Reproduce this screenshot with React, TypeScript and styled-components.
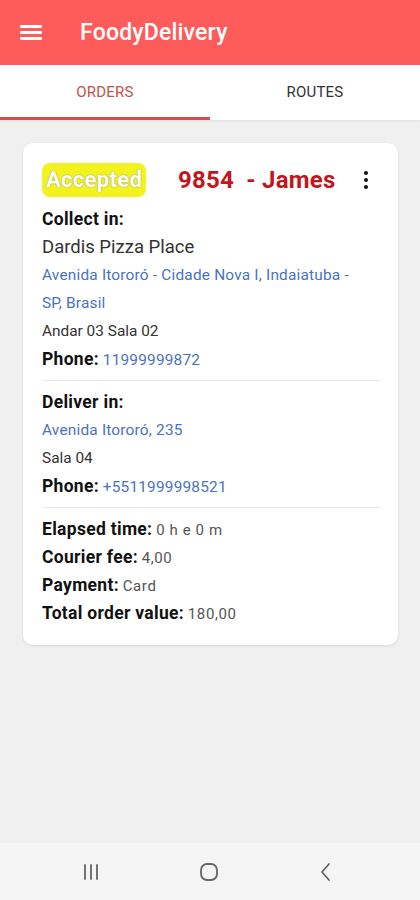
import * as React from 'react';
import styled, { createGlobalStyle } from 'styled-components'

const GlobalStyle = createGlobalStyle`
html, body {
margin: 0;
padding: 0;
background: #f0f0f0;
font-family: Roboto, "Noto Sans", Arial, sans-serif;
}
`

const Screen = styled.div`
height: 900px;
width: 420px;
display: flex;
flex-direction: column;
background: #f0f0f0;
`

const AppBar = styled.div`
height: 65px;
background: #fe5b5b;
display: flex;
align-items: center;
padding-left: 20px;
box-sizing: border-box;
`

const MenuButton = styled.div`
width: 22px;
display: flex;
flex-direction: column;
gap: 3.5px;
margin-right: 38px;
span {
height: 2.5px;
background: #fff;
border-radius: 1px;
}
`

const Title = styled.div`
color: #fff;
font-size: 23px;
font-weight: 500;
letter-spacing: 0.2px;
`

const Tabs = styled.div`
height: 55px;
background: #fff;
display: flex;
box-shadow: 0 1px 2px rgba(0,0,0,0.08);
`

const Tab = styled.div<{ active?: boolean }>`
flex: 1;
display: flex;
align-items: center;
justify-content: center;
font-size: 15px;
letter-spacing: 0.2px;
color: ${p => p.active ? '#c6504c' : '#333'};
border-bottom: 3px solid ${p => p.active ? '#d05050' : 'transparent'};
padding-top: 2px;
`

const Content = styled.div`
flex: 1;
padding: 23px 22px 0 23px;
`

const Card = styled.div`
background: #fff;
border-radius: 10px;
padding: 20px 18px 18px 19px;
box-shadow: 0 1px 3px rgba(0,0,0,0.1);
`

const CardHeader = styled.div`
display: flex;
align-items: center;
height: 34px;
margin-bottom: 8px;
`

const Badge = styled.div`
background: #f2f21e;
border-radius: 8px;
color: #fff;
font-size: 22px;
font-weight: 700;
letter-spacing: 0.3px;
height: 34px;
line-height: 34px;
padding: 0 4px;
text-shadow: 0 0 1px #9a9a40, 0 0 1px #9a9a40;
`

const OrderTitle = styled.div`
flex: 1;
margin-left: 32px;
color: #c2161c;
font-size: 24px;
font-weight: 700;
letter-spacing: 0.2px;
white-space: pre;
`

const Kebab = styled.div`
display: flex;
flex-direction: column;
gap: 3px;
margin-right: 12px;
span {
width: 4px;
height: 4px;
border-radius: 50%;
background: #111;
}
`

const Line = styled.div`
height: 28px;
line-height: 28px;
font-size: 15.4px;
color: #333;
white-space: nowrap;
`

const Label = styled.span`
font-weight: 700;
font-size: 17.5px;
letter-spacing: 0.3px;
color: #111;
`

const Heading = styled(Line)`
font-weight: 700;
font-size: 17.5px;
letter-spacing: 0.3px;
color: #111;
`

const Place = styled(Line)`
font-size: 18.5px;
color: #333;
`

const Link = styled.span`
color: #4a72c2;
letter-spacing: 0.2px;
`

const Value = styled.span`
color: #555;
font-size: 15px;
letter-spacing: 0.6px;
`

const Divider = styled.div`
height: 1px;
background: #e8e8e8;
margin: 7px 0 7px 0;
`

const NavBar = styled.div`
height: 57px;
background: #f5f5f5;
display: flex;
align-items: center;
justify-content: space-between;
padding: 0 82px 0 79px;
`

const NavIcon = styled.svg`
width: 24px;
height: 24px;
`

export default function App() {
    return (
        <Screen>
            <GlobalStyle />
            <AppBar>
                <MenuButton><span /><span /><span /></MenuButton>
                <Title>FoodyDelivery</Title>
            </AppBar>
            <Tabs>
                <Tab active>ORDERS</Tab>
                <Tab>ROUTES</Tab>
            </Tabs>
            <Content>
                <Card>
                    <CardHeader>
                        <Badge>Accepted</Badge>
                        <OrderTitle>{'9854  - James'}</OrderTitle>
                        <Kebab><span /><span /><span /></Kebab>
                    </CardHeader>
                    <Heading>Collect in:</Heading>
                    <Place>Dardis Pizza Place</Place>
                    <Line><Link>Avenida Itororó - Cidade Nova I, Indaiatuba -</Link></Line>
                    <Line><Link>SP, Brasil</Link></Line>
                    <Line>Andar 03 Sala 02</Line>
                    <Line><Label>Phone:</Label> <Link>11999999872</Link></Line>
                    <Divider />
                    <Heading>Deliver in:</Heading>
                    <Line><Link>Avenida Itororó, 235</Link></Line>
                    <Line>Sala 04</Line>
                    <Line><Label>Phone:</Label> <Link>+5511999998521</Link></Line>
                    <Divider />
                    <Line><Label>Elapsed time:</Label> <Value>0 h e 0 m</Value></Line>
                    <Line><Label>Courier fee:</Label> <Value>4,00</Value></Line>
                    <Line><Label>Payment:</Label> <Value>Card</Value></Line>
                    <Line><Label>Total order value:</Label> <Value>180,00</Value></Line>
                </Card>
            </Content>
            <NavBar>
                <NavIcon viewBox="0 0 24 24" fill="none" stroke="#666" strokeWidth="1.8" strokeLinecap="round">
                    <path d="M6 5v14M12 5v14M18 5v14" />
                </NavIcon>
                <NavIcon viewBox="0 0 24 24" fill="none" stroke="#666" strokeWidth="1.8">
                    <rect x="4" y="4" width="16" height="16" rx="6" />
                </NavIcon>
                <NavIcon viewBox="0 0 24 24" fill="none" stroke="#666" strokeWidth="1.8" strokeLinecap="round" strokeLinejoin="round">
                    <path d="M15 4l-7 8 7 8" />
                </NavIcon>
            </NavBar>
        </Screen>
    )
}
